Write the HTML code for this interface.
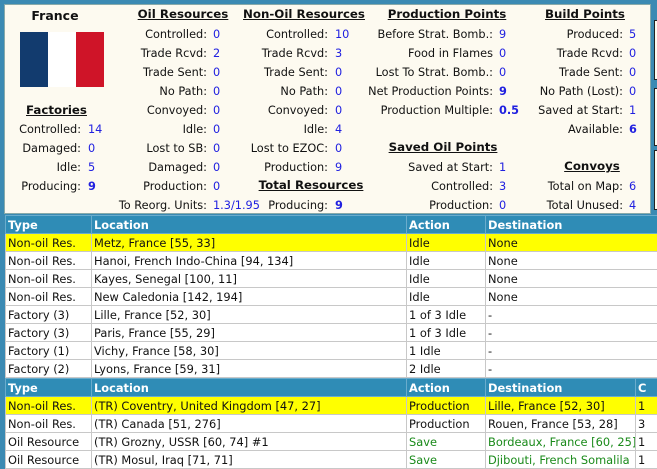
<!DOCTYPE html>
<html><head><meta charset="utf-8"><style>
*{margin:0;padding:0;box-sizing:border-box}
body{width:657px;height:468px;overflow:hidden;background:#3b8ab3;font-family:"DejaVu Sans","Liberation Sans",sans-serif;font-size:11.3px;color:#111;position:relative}
.panel{position:absolute;left:4px;top:4px;width:647px;height:210px;background:#fdfaf0;border:1px solid #8aa;}
.t{position:absolute;white-space:nowrap;line-height:13px}
.r{text-align:right}
.v{color:#2020e0}
.b{font-weight:bold}
.h{font-weight:bold;text-decoration:underline;font-size:11.8px}
.side{position:absolute;left:654px;width:6px;border:1px solid #222;background:#fdfaf0}
table{position:absolute;border-collapse:collapse;table-layout:fixed;background:#fff;font-size:11.4px}
td{height:18px;border:1px solid #c8c8c8;padding:0 0 0 2px;white-space:nowrap;overflow:hidden;line-height:16px}
th{height:18px;background:#2f8cb6;color:#fff;text-align:left;padding:0 0 0 2px;border:1px solid #6aaccc;font-weight:bold;line-height:16px}
.y td{background:#ffff00}
.g{color:#1a8a1a}
</style></head><body>
<div class="panel"></div>
<div class="side" style="top:20px;height:60px"></div>
<div class="side" style="top:88px;height:58px"></div>
<div class="side" style="top:150px;height:60px"></div>

<div class="t b" style="left:20px;top:9px;width:70px;text-align:center;font-size:12.5px">France</div>
<div style="position:absolute;left:20px;top:32px;width:84px;height:55px;display:flex">
<div style="flex:1;background:#123b6e"></div><div style="flex:1;background:#fff"></div><div style="flex:1;background:#cf1428"></div></div>
<div class="t h" style="left:26px;top:104px">Factories</div>

<script>
function add(lr,vl,y,l,v,b){var d=document.createElement('div');d.className='t r';d.style.right=(657-lr)+'px';d.style.top=(y-6)+'px';d.textContent=l;document.body.appendChild(d);
var e=document.createElement('div');e.className='t v'+(b?' b':'');e.style.left=vl+'px';e.style.top=(y-6)+'px';e.textContent=v;document.body.appendChild(e);}
function head(cx,y,txt){var d=document.createElement('div');d.className='t h';d.style.left=(cx-100)+'px';d.style.width='200px';d.style.textAlign='center';d.style.top=(y-7)+'px';d.textContent=txt;document.body.appendChild(d);}
var Y=[34,53,72,91,110,129,148,167,186];
add(81,88,129,'Controlled:','14');add(81,88,148,'Damaged:','0');add(81,88,167,'Idle:','5');add(81,88,186,'Producing:','9',1);
head(183,15,'Oil Resources');
['Controlled:','Trade Rcvd:','Trade Sent:','No Path:','Convoyed:','Idle: ','Lost to SB:','Damaged:','Production:'].forEach(function(l,i){add(207,213,Y[i],l,['0','2','0','0','0','0','0','0','0'][i]);});
add(207,213,205,'To Reorg. Units:','1.3/1.95');
head(304,15,'Non-Oil Resources');
['Controlled:','Trade Rcvd:','Trade Sent:','No Path:','Convoyed:','Idle:','Lost to EZOC:','Production:'].forEach(function(l,i){add(328,335,Y[i],l,['10','3','0','0','0','4','0','9'][i]);});
head(311,186,'Total Resources');
add(328,335,205,'Producing:','9',1);
head(447,15,'Production Points');
add(493,499,34,'Before Strat. Bomb.:','9');add(493,499,53,'Food in Flames','0');add(493,499,72,'Lost To Strat. Bomb.:','0');add(493,499,91,'Net Production Points:','9',1);add(493,499,110,'Production Multiple:','0.5',1);
head(443,148,'Saved Oil Points');
add(493,499,167,'Saved at Start:','1');add(493,499,186,'Controlled:','3');add(493,499,205,'Production:','0');
head(585,15,'Build Points');
['Produced:','Trade Rcvd:','Trade Sent:','No Path (Lost):','Saved at Start:','Available:'].forEach(function(l,i){add(623,629,Y[i],l,['5','0','0','0','1','6'][i],i==5);});
head(592,167,'Convoys');
add(623,629,186,'Total on Map:','6');add(623,629,205,'Total Unused:','4');
</script>

<table style="left:5px;top:215px;width:660px">
<colgroup><col style="width:86px"><col style="width:315px"><col style="width:79px"><col style="width:180px"></colgroup>
<tr><th>Type</th><th>Location</th><th>Action</th><th>Destination</th></tr>
<tr class="y"><td>Non-oil Res.</td><td>Metz, France [55, 33]</td><td>Idle</td><td>None</td></tr>
<tr><td>Non-oil Res.</td><td>Hanoi, French Indo-China [94, 134]</td><td>Idle</td><td>None</td></tr>
<tr><td>Non-oil Res.</td><td>Kayes, Senegal [100, 11]</td><td>Idle</td><td>None</td></tr>
<tr><td>Non-oil Res.</td><td>New Caledonia [142, 194]</td><td>Idle</td><td>None</td></tr>
<tr><td>Factory (3)</td><td>Lille, France [52, 30]</td><td>1 of 3 Idle</td><td>-</td></tr>
<tr><td>Factory (3)</td><td>Paris, France [55, 29]</td><td>1 of 3 Idle</td><td>-</td></tr>
<tr><td>Factory (1)</td><td>Vichy, France [58, 30]</td><td>1 Idle</td><td>-</td></tr>
<tr><td>Factory (2)</td><td>Lyons, France [59, 31]</td><td>2 Idle</td><td>-</td></tr>
</table>
<table style="left:5px;top:378px;width:670px">
<colgroup><col style="width:86px"><col style="width:315px"><col style="width:79px"><col style="width:150px"><col style="width:40px"></colgroup>
<tr><th>Type</th><th>Location</th><th>Action</th><th>Destination</th><th>C</th></tr>
<tr class="y"><td>Non-oil Res.</td><td>(TR) Coventry, United Kingdom [47, 27]</td><td>Production</td><td>Lille, France [52, 30]</td><td>1</td></tr>
<tr><td>Non-oil Res.</td><td>(TR) Canada [51, 276]</td><td>Production</td><td>Rouen, France [53, 28]</td><td>3</td></tr>
<tr><td>Oil Resource</td><td>(TR) Grozny, USSR [60, 74] #1</td><td class="g">Save</td><td class="g">Bordeaux, France [60, 25]</td><td>1</td></tr>
<tr><td>Oil Resource</td><td>(TR) Mosul, Iraq [71, 71]</td><td class="g">Save</td><td class="g">Djibouti, French Somalila</td><td>1</td></tr>
</table>
</body></html>
